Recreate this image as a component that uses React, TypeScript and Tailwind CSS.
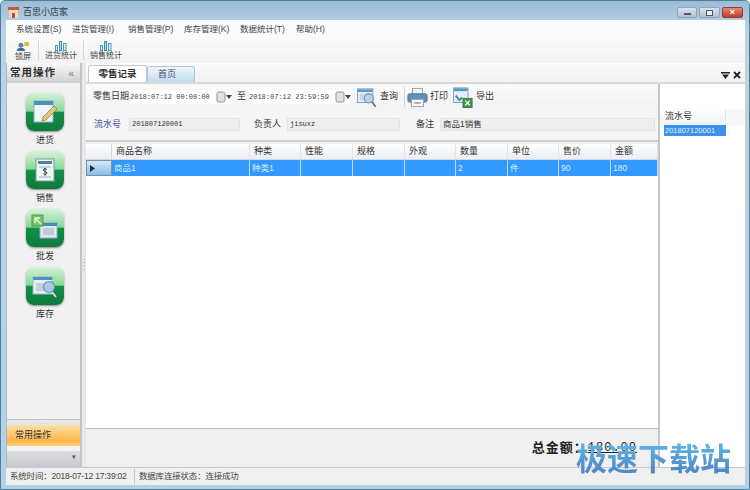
const cjk = "font-['Liberation_Sans','Noto_Sans_CJK_SC',sans-serif]"

const menus = ["系统设置(S)", "进货管理(I)", "销售管理(P)", "库存管理(K)", "数据统计(T)", "帮助(H)"]
const columns = ["商品名称", "种类", "性能", "规格", "外观", "数量", "单位", "售价", "金额"]
const cells = ["商品1", "种类1", "", "", "", "2", "件", "90", "180"]
const gridCols = "grid grid-cols-[26px_138px_51px_52px_52px_51px_52px_51px_52px_47px]"

function Bars() {
  return (
    <svg width="12" height="10" viewBox="0 0 12 10">
      <rect x="0.5" y="4.5" width="2" height="5" fill="#d8edf7" stroke="#4b9ac8" />
      <rect x="4.5" y="0.5" width="2" height="9" fill="#a8d8ee" stroke="#3f8fc0" />
      <rect x="8.5" y="2.5" width="2.500" height="7" fill="#e2f1f9" stroke="#4b9ac8" />
    </svg>
  )
}

function Lock() {
  return (
    <svg width="14" height="11" viewBox="0 0 17 13">
      <circle cx="6" cy="5" r="3" fill="#5a84a8" />
      <path d="M1 12c0-3 2-4 5-4s5 1 5 4z" fill="#3f6f96" />
      <rect x="10" y="1" width="6" height="5" rx="1" fill="#e8b93c" />
    </svg>
  )
}

function Caret() {
  return (
    <svg width="16" height="12" viewBox="0 0 16 12" className="shrink-0">
      <rect x="1" y="1" width="8" height="10" rx="1.5" fill="#dfe3e8" stroke="#8b929a" />
      <path d="M10 4h6l-3 4z" fill="#444" />
    </svg>
  )
}

function Search() {
  return (
    <svg width="20" height="23" viewBox="0 0 22 24">
      <rect x="0.5" y="2.5" width="17" height="15" fill="#e6eff7" stroke="#7e9cb8" />
      <rect x="1" y="3" width="16" height="3" fill="#5f9ccc" />
      <rect x="3" y="8" width="7" height="7" fill="#c7d6e4" />
      <circle cx="13" cy="13" r="5" fill="#b9d4ea" stroke="#7190ad" strokeWidth="1.2" />
      <path d="M16.5 17l4 5" stroke="#6d7780" strokeWidth="2" />
    </svg>
  )
}

function Printer() {
  return (
    <svg width="21" height="21" viewBox="0 0 23 22">
      <rect x="6" y="1" width="11" height="7" fill="#eef3f7" stroke="#8ca0b2" />
      <rect x="1" y="7" width="21" height="9" rx="2" fill="#5d93b8" stroke="#3f6f92" />
      <rect x="5" y="13" width="13" height="8" fill="#f5f7f9" stroke="#8ca0b2" />
      <path d="M8 17h7" stroke="#555" />
    </svg>
  )
}

function Export() {
  return (
    <svg width="20" height="23" viewBox="0 0 22 24">
      <rect x="0.5" y="1.5" width="16" height="16" fill="#e6eff7" stroke="#7e9cb8" />
      <rect x="1" y="2" width="15" height="3" fill="#4f9bc9" />
      <path d="M3 10l4 5 3-3" stroke="#4a7fa8" strokeWidth="2" fill="none" />
      <rect x="11" y="13" width="10" height="10" fill="#3f9a54" stroke="#2d7a42" />
      <path d="M13.5 15.5l5 5m0-5l-5 5" stroke="#fff" strokeWidth="1.3" />
    </svg>
  )
}

function Tile({ kind, label }: { kind: string; label: string }) {
  return (
    <div className="flex flex-col items-center">
      <div className="w-[38px] h-[38px] rounded-[8px] overflow-hidden flex items-center justify-center bg-[linear-gradient(#d5f3d8_0%,#86d79a_48%,#129048_50%,#0d7a3c_100%)] shadow-[0_1px_2px_#8a8a8a]">
        <svg width="28" height="28" viewBox="0 0 28 28">
          {kind === "in" && (
            <>
              <rect x="3" y="3" width="19" height="21" fill="#eef5fa" stroke="#8fb0c6" />
              <rect x="3" y="3" width="19" height="4" fill="#4f8fbd" />
              <path d="M12 19L23 8l3 3-11 11-4 1z" fill="#e3c77a" stroke="#8b7a3e" strokeWidth="0.7" />
            </>
          )}
          {kind === "sale" && (
            <>
              <rect x="5" y="3" width="18" height="22" fill="#eef5f5" stroke="#7f9aa8" />
              <rect x="7" y="5" width="14" height="3" fill="#55809c" />
              <path d="M8 11h12M8 21h12" stroke="#9fb5c2" />
              <rect x="11" y="12" width="6" height="8" fill="#fff" />
              <path d="M16 13.5c-1-1-3.5-1-3.5.7s3.5 1 3.5 2.8-2.5 1.500-3.500.6M14 12v8" stroke="#244" fill="none" />
            </>
          )}
          {kind === "batch" && (
            <>
              <rect x="9" y="9" width="17" height="15" fill="#dfe9f2" stroke="#8fb0c6" />
              <rect x="9" y="9" width="17" height="3" fill="#3f8cc0" />
              <rect x="12" y="14" width="11" height="7" fill="#c3ccd6" />
              <rect x="1" y="1" width="11" height="11" fill="#76c36a" stroke="#4c9a48" />
              <path d="M10 10L4 4m0 5V4h5" stroke="#e9f7e4" strokeWidth="1.500" fill="none" />
            </>
          )}
          {kind === "stock" && (
            <>
              <rect x="2" y="5" width="19" height="17" fill="#e6eff7" stroke="#9db4c8" />
              <rect x="2" y="5" width="19" height="3" fill="#4d8fbe" />
              <rect x="5" y="11" width="9" height="8" fill="#c5d0db" />
              <circle cx="18" cy="15" r="5.500" fill="#a9c9e4" stroke="#6f8faa" strokeWidth="1.200" />
              <path d="M21 20l4 5" stroke="#d7dde2" strokeWidth="2" />
            </>
          )}
        </svg>
      </div>
      <span className="mt-[3px] text-[9px] leading-[12px] text-[#333]">{label}</span>
    </div>
  )
}

export default function App() {
  return (
    <div className={`relative w-[750px] h-[490px] overflow-hidden flex flex-col border border-[#4d7f95] rounded-t-[5px] pl-[5px] pr-[4px] pb-[4px] bg-[linear-gradient(#9cbcd6_0px,#bcd3e6_30px,#b4d0e8_100%)] text-[#333] ${cjk}`}>
      {/* title bar */}
      <div className="h-[19px] shrink-0 flex items-center gap-[3px] pt-[4px]">
        <svg width="11" height="11" viewBox="0 0 11 11" className="ml-[2px]">
          <rect width="11" height="3" fill="#c8553f" />
          <rect x="1" y="3" width="9" height="8" fill="#f1d9b0" />
          <rect x="4" y="6" width="3" height="5" fill="#b2513d" />
        </svg>
        <span className="text-[9px] text-[#2e3b46] ml-[1px]">百思小店家</span>
        <div className="ml-auto mr-[2px] flex gap-[2px]">
          <div className="w-[20px] h-[11px] rounded-[2px] border border-[#8fa3b6] bg-[linear-gradient(#d7e3ee,#aec2d4)] flex items-end justify-center pb-[2px]">
            <div className="w-[7px] h-[2px] bg-white border-[0.5px] border-[#556]" />
          </div>
          <div className="w-[21px] h-[11px] rounded-[2px] border border-[#8fa3b6] bg-[linear-gradient(#d7e3ee,#aec2d4)] flex items-center justify-center">
            <div className="w-[7px] h-[6px] border border-[#556] bg-[#e8eef4]" />
          </div>
          <div className="w-[21px] h-[11px] rounded-[2px] border border-[#8c4038] bg-[linear-gradient(#e28a78,#c5392c)] flex items-center justify-center text-white text-[9px] font-bold leading-none">×</div>
        </div>
      </div>

      {/* menu + toolbar */}
      <div className="h-[18px] shrink-0 flex items-center pt-[1px] pl-[10px] bg-[#fafbfc] text-[8.5px] text-[#444]">
        {menus.map((m) => (
          <span key={m} className="w-[56px] whitespace-nowrap">{m}</span>
        ))}
      </div>
      <div className="h-[25px] shrink-0 flex items-start pl-[2px] bg-[linear-gradient(#fbfbfb,#f2f2f2)] text-[8px] text-[#444]">
        <div className="w-[30px] flex flex-col items-center leading-[10px] mt-[3px]">
          <Lock />
          <span>锁屏</span>
        </div>
        <div className="w-px h-[20px] mt-[2px] bg-[#d5d5d5]" />
        <div className="w-[44px] flex flex-col items-center leading-[10px] mt-[3px]">
          <Bars />
          <span className="whitespace-nowrap">进货统计</span>
        </div>
        <div className="w-px h-[20px] mt-[2px] bg-[#d5d5d5]" />
        <div className="w-[44px] flex flex-col items-center leading-[10px] mt-[3px]">
          <Bars />
          <span className="whitespace-nowrap">销售统计</span>
        </div>
      </div>

      {/* body */}
      <div className="flex-1 min-h-0 flex bg-[#f0f0f0]">
        {/* sidebar */}
        <div className="w-[76px] shrink-0 flex flex-col border-r-2 border-[#c4c4c4] border-l border-l-[#a9b8c6]">
          <div className="h-[20px] flex items-center justify-between pl-[3px] pr-[6px] bg-[linear-gradient(#fafafa,#cfcfcf)] text-[10.5px] font-bold tracking-[1px] text-[#333]">
            常用操作
            <span className="text-[10px] font-normal text-[#777] tracking-normal">«</span>
          </div>
          <div className="flex-1 flex flex-col items-center gap-[5px] pt-[10px] pl-[3px] bg-[#f2f1f1]">
            <Tile kind="in" label="进货" />
            <Tile kind="sale" label="销售" />
            <Tile kind="batch" label="批发" />
            <Tile kind="stock" label="库存" />
          </div>
          <div className="h-[6px] bg-[#e4e6e8] border-t border-[#c0c0c0] flex items-center justify-center text-[#aaa] text-[5px] tracking-[1px] leading-none">....</div>
          <div className="h-[21px] flex items-center pl-[8px] bg-[linear-gradient(#fde1a6,#fdb54c_75%,#fdd27a)] text-[9px] text-[#333]">常用操作</div>
          <div className="h-[5px] bg-[#f4f4f4]" />
          <div className="h-[16px] flex justify-end pr-[4px] pt-[2px] bg-[linear-gradient(#dcdde0,#c6c9ce)] text-[7px] text-[#555] leading-none">▾</div>
        </div>

        {/* vertical splitter */}
        <div className="w-[4px] shrink-0 flex items-center justify-center bg-[#e8e8e8] text-[#555] text-[7px] leading-[3px] [writing-mode:vertical-rl] tracking-[1px]">····</div>

        {/* main */}
        <div className="flex-1 min-w-0 flex flex-col">
          {/* tab strip */}
          <div className="h-[21px] shrink-0 flex items-end pl-[1px] bg-[linear-gradient(#fbfbfb,#f2f2f2)] border-b-2 border-[#d9d9d9]">
            <div className="h-[17px] w-[59px] flex items-center justify-center rounded-t-[3px] border border-b-0 border-[#c9c9c9] bg-white text-[9.5px] font-bold text-[#333] ml-[1px]">零售记录</div>
            <div className="h-[16px] w-[48px] flex items-center pl-[10px] rounded-t-[3px] border border-b-0 border-[#a9c9e0] bg-[linear-gradient(#f0f7fb,#bfdcf0)] text-[9px] text-[#445]">首页</div>
            <div className="ml-auto mr-[4px] mb-[3px] flex items-center gap-[3px] text-[#222]">
              <svg width="9" height="7" viewBox="0 0 9 7"><path d="M0 0h9v1.500H0zM1 2.500h7L4.500 7z" fill="#222" /></svg>
              <svg width="8" height="8" viewBox="0 0 8 8"><path d="M1 1l6 6m0-6L1 7" stroke="#222" strokeWidth="1.800" /></svg>
            </div>
          </div>

          <div className="flex-1 min-h-0 flex">
            {/* record area */}
            <div className="w-[574px] shrink-0 flex flex-col border-r-2 border-[#c6c6c6]">
              {/* query row */}
              <div className="h-[26px] shrink-0 flex items-center pl-[7px] text-[9px] text-[#333] bg-[linear-gradient(#fafafa,#f2f2f2)]">
                <span className="w-[37px] whitespace-nowrap">零售日期</span>
                <div className="w-[102px] h-[14px] flex items-center justify-between bg-white font-['Liberation_Mono'] text-[7px] text-[#444]">
                  <span className="whitespace-nowrap">2018:07:12 00:00:00</span>
                  <Caret />
                </div>
                <span className="ml-[5px]">至</span>
                <div className="ml-[3px] w-[102px] h-[14px] flex items-center justify-between bg-white font-['Liberation_Mono'] text-[7px] text-[#444]">
                  <span className="whitespace-nowrap">2018:07:12 23:59:59</span>
                  <Caret />
                </div>
                <div className="ml-[6px] flex items-center gap-[3px]"><Search /><span>查询</span></div>
                <div className="ml-[6px] w-px h-[20px] bg-[#d4d4d4]" />
                <div className="ml-[2px] flex items-center gap-[2px]"><Printer /><span>打印</span></div>
                <div className="ml-[5px] flex items-center gap-[3px]"><Export /><span>导出</span></div>
              </div>

              {/* form row */}
              <div className="h-[30px] shrink-0 flex items-center pl-[8px] pb-[1px] text-[9px] text-[#333] bg-[#f5f5f5]">
                <span className="w-[31px] text-[#3a4fa0]">流水号</span>
                <div className="ml-[4px] w-[111px] h-[13px] flex items-center pl-[2px] bg-[#eeeeee] border border-[#e3e3e3] font-['Liberation_Mono'] text-[7px]">201807120001</div>
                <span className="ml-[14px]">负责人</span>
                <div className="ml-[6px] w-[113px] h-[13px] flex items-center pl-[2px] bg-[#eeeeee] border border-[#e3e3e3] font-['Liberation_Mono'] text-[7px]">jisuxz</div>
                <span className="ml-[16px]">备注</span>
                <div className="ml-[6px] w-[215px] h-[13px] flex items-center pl-[2px] bg-[#eeeeee] border border-[#e3e3e3] text-[8.5px]">商品1销售</div>
              </div>

              {/* horizontal splitter */}
              <div className="h-[4px] shrink-0 flex items-center justify-center border-t-2 border-[#cfcfcf] bg-[#efefef] text-[#666] text-[6px] leading-none tracking-[1px]">.....</div>

              {/* grid */}
              <div className="flex-1 min-h-0 bg-white">
                <div className={`${gridCols} h-[16px] bg-[linear-gradient(#ffffff,#e8eff5)] border-b border-[#d3d9df] text-[9px] text-[#333]`}>
                  <div className="border-r border-[#d5d5d5]" />
                  {columns.map((c) => (
                    <div key={c} className="flex items-center pl-[4px] border-r border-[#e2e6ea]">{c}</div>
                  ))}
                </div>
                <div className={`${gridCols} h-[16px] bg-[#3399ff] text-[8.5px] text-[#dcefff]`}>
                  <div className="flex items-center pl-[3px] bg-[linear-gradient(#d8e8f5,#87bde6)] border border-[#6b94b5]">
                    <svg width="5" height="7" viewBox="0 0 5 7"><path d="M0 0l5 3.500L0 7z" fill="#1f2f3f" /></svg>
                  </div>
                  {cells.map((c, i) => (
                    <div key={i} className="flex items-center pl-[2px] border-r border-[#b9dcff]">{c}</div>
                  ))}
                </div>
              </div>

              {/* total */}
              <div className="h-[39px] shrink-0 flex items-start justify-end pr-[21px] pt-[9px] bg-[#f0f0f0] border-t border-[#bdbdbd] text-[13px] font-bold text-[#222] tracking-[1px]">
                <span>总金额：</span>
                <span className="font-['Liberation_Mono'] text-[12px] leading-[20px] underline font-normal">180.00</span>
              </div>
            </div>

            {/* serial list */}
            <div className="flex-1 min-w-0 flex flex-col bg-white pt-[25px] text-[9px]">
              <div className="h-[16px] flex bg-[#f8f8f8]">
                <div className="w-[66px] flex items-center pl-[5px] border-r border-[#e4e4e4] bg-[linear-gradient(#ffffff,#f0f3f6)]">流水号</div>
              </div>
              <div className="ml-[4px] w-[62px] h-[11px] flex items-center pl-[1px] bg-[#3d93ea] text-[#e4f1ff] text-[7.5px]">201807120001</div>
            </div>
          </div>
        </div>
      </div>

      {/* status bar */}
      <div className="h-[18px] shrink-0 flex items-center bg-[#f0f0f0] border-t border-[#c8c8c8] text-[8.5px] tracking-[-0.2px] text-[#444]">
        <span className="w-[129px] pl-[4px] whitespace-nowrap border-r border-[#c8c8c8] leading-[15px]">系统时间：2018-07-12 17:39:02</span>
        <span className="pl-[4px] whitespace-nowrap">数据库连接状态：连接成功</span>
      </div>

      {/* watermark */}
      <div className="absolute left-[575px] top-[441px] text-[31px] leading-[36px] font-bold whitespace-nowrap text-transparent bg-clip-text bg-[linear-gradient(#5fb6e8,#4a7fc0)]">极速下载站</div>
    </div>
  )
}
